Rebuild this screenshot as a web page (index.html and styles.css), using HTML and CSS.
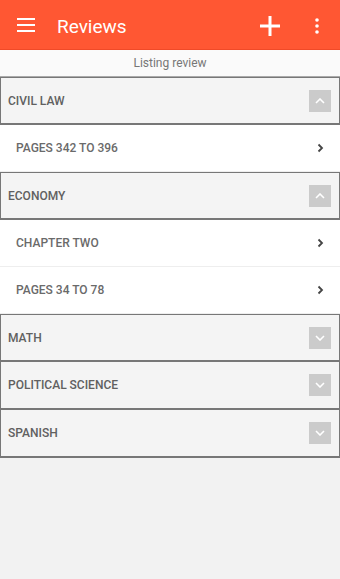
FILE: index.html
```html
<!DOCTYPE html>
<html lang="en">
<head>
    <meta charset="UTF-8">
    <meta name="viewport" content="width=device-width, initial-scale=1.0">
    <title>Reviews</title>
    <link rel="stylesheet" href="styles.css">
</head>
<body>
    <div class="toolbar">
        <svg class="menu-icon" width="18" height="14" viewBox="0 0 18 14">
            <rect x="0" y="0" width="18" height="2" fill="#fff"/>
            <rect x="0" y="6" width="18" height="2" fill="#fff"/>
            <rect x="0" y="12" width="18" height="2" fill="#fff"/>
        </svg>
        <span class="title">Reviews</span>
        <svg class="add-icon" width="20" height="20" viewBox="0 0 20 20">
            <rect x="8.5" y="0" width="3" height="20" fill="#fff"/>
            <rect x="0" y="8.5" width="20" height="3" fill="#fff"/>
        </svg>
        <svg class="more-icon" width="4" height="16" viewBox="0 0 4 16">
            <circle cx="2" cy="2" r="1.8" fill="#fff"/>
            <circle cx="2" cy="8" r="1.8" fill="#fff"/>
            <circle cx="2" cy="14" r="1.8" fill="#fff"/>
        </svg>
    </div>

    <div class="subheader">Listing review</div>

    <div class="list">
        <div class="group-header">
            <span>CIVIL LAW</span>
            <span class="toggle"><svg width="10" height="6" viewBox="0 0 10 6"><path d="M1 5 L5 1 L9 5" stroke="#fff" stroke-width="1.6" fill="none"/></svg></span>
        </div>
        <div class="item">
            <span>PAGES 342 TO 396</span>
            <svg width="7" height="10" viewBox="0 0 7 10"><path d="M1.5 1.5 L5 5 L1.5 8.5" stroke="#444" stroke-width="1.8" fill="none"/></svg>
        </div>

        <div class="group-header">
            <span>ECONOMY</span>
            <span class="toggle"><svg width="10" height="6" viewBox="0 0 10 6"><path d="M1 5 L5 1 L9 5" stroke="#fff" stroke-width="1.6" fill="none"/></svg></span>
        </div>
        <div class="item">
            <span>CHAPTER TWO</span>
            <svg width="7" height="10" viewBox="0 0 7 10"><path d="M1.5 1.5 L5 5 L1.5 8.5" stroke="#444" stroke-width="1.8" fill="none"/></svg>
        </div>
        <div class="item">
            <span>PAGES 34 TO 78</span>
            <svg width="7" height="10" viewBox="0 0 7 10"><path d="M1.5 1.5 L5 5 L1.5 8.5" stroke="#444" stroke-width="1.8" fill="none"/></svg>
        </div>

        <div class="group-header">
            <span>MATH</span>
            <span class="toggle"><svg width="10" height="6" viewBox="0 0 10 6"><path d="M1 1 L5 5 L9 1" stroke="#fff" stroke-width="1.6" fill="none"/></svg></span>
        </div>
        <div class="group-header">
            <span>POLITICAL SCIENCE</span>
            <span class="toggle"><svg width="10" height="6" viewBox="0 0 10 6"><path d="M1 1 L5 5 L9 1" stroke="#fff" stroke-width="1.6" fill="none"/></svg></span>
        </div>
        <div class="group-header">
            <span>SPANISH</span>
            <span class="toggle"><svg width="10" height="6" viewBox="0 0 10 6"><path d="M1 1 L5 5 L9 1" stroke="#fff" stroke-width="1.6" fill="none"/></svg></span>
        </div>
    </div>
</body>
</html>
```

FILE: styles.css
```css
body {
    margin: 0;
    font-family: Roboto, "Noto Sans", sans-serif;
    background-color: #f2f2f2;
    min-height: 579px;
}
.toolbar {
    height: 50px;
    background-color: #ff5733;
    display: flex;
    align-items: center;
    padding: 3px 21px 0 17px;
    box-sizing: border-box;
    border-bottom: 1px solid #f04a28;
}
.menu-icon {
    margin-right: 22px;
    margin-top: -2px;
}
.title {
    color: #fff;
    font-size: 19px;
    flex: 1;
}
.add-icon {
    margin-right: 35px;
}
.subheader {
    height: 26px;
    line-height: 26px;
    text-align: center;
    font-size: 12px;
    color: #777;
    background-color: #fafafa;
    border-bottom: 1px solid #aaa;
}
.group-header {
    height: 45px;
    display: flex;
    align-items: center;
    justify-content: space-between;
    padding: 0 8px 0 7px;
    background-color: #f4f4f4;
    border: 1px solid #777;
    border-bottom-width: 2px;
    font-size: 12px;
    font-weight: 500;
    color: #606060;
}
.group-header + .group-header {
    border-top: none;
    height: 46px;
}
.toggle {
    width: 22px;
    height: 22px;
    background-color: #cbcbcb;
    display: flex;
    align-items: center;
    justify-content: center;
}
.item {
    height: 46px;
    display: flex;
    align-items: center;
    justify-content: space-between;
    padding: 0 16px 0 16px;
    background-color: #fff;
    border-bottom: 1px solid #eee;
    font-size: 12px;
    font-weight: 500;
    color: #6a6a6a;
}
```
